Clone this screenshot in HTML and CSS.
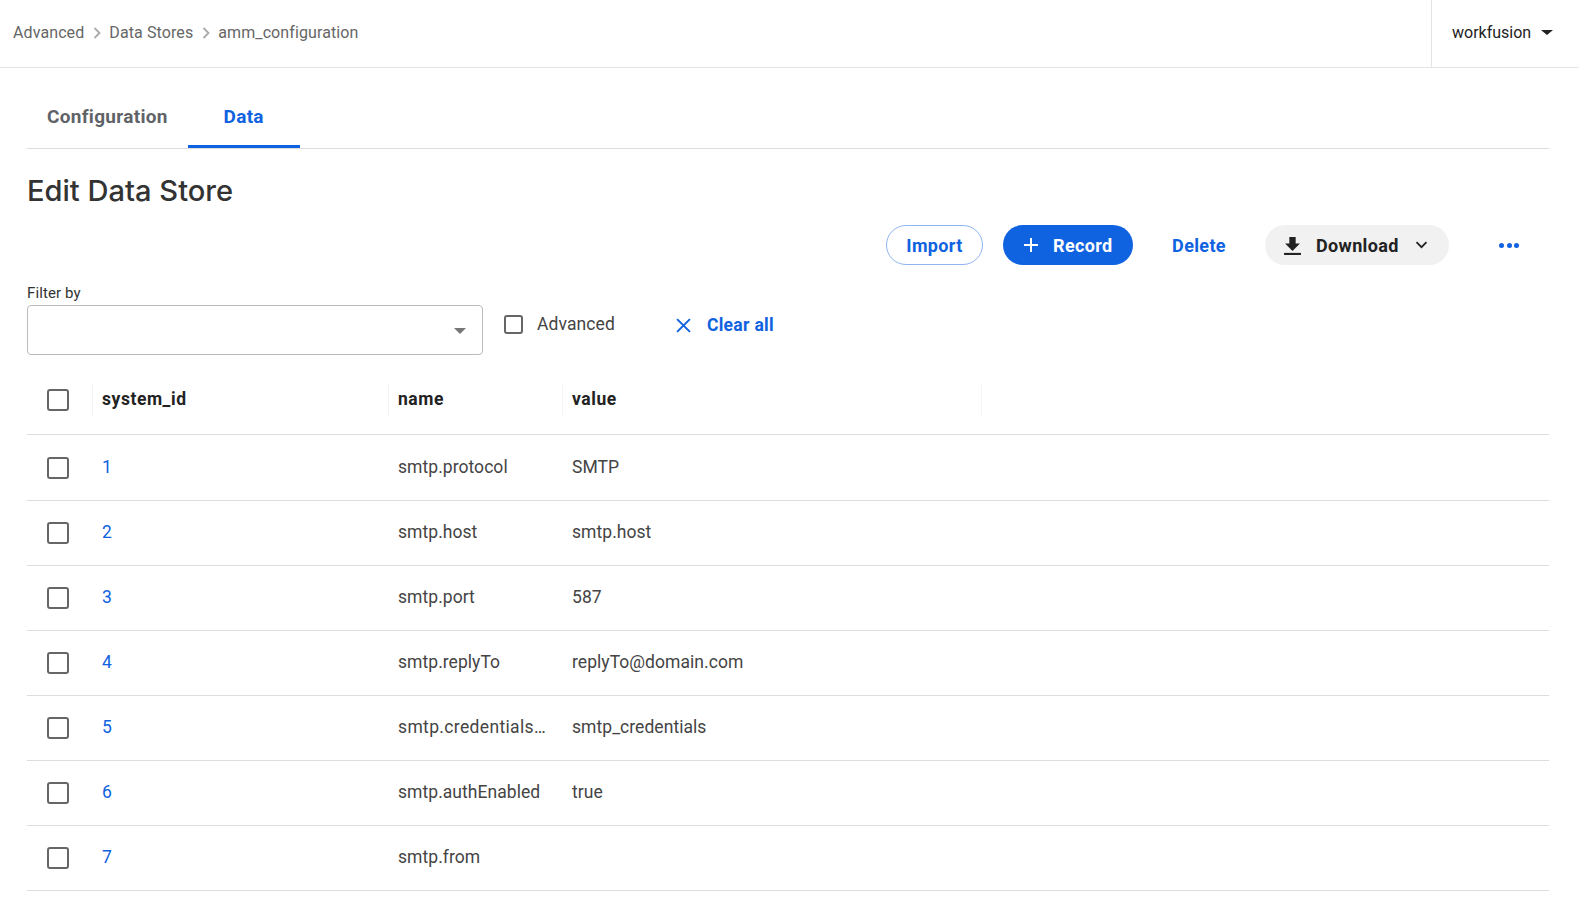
FILE: index.html
```html
<!DOCTYPE html>
<html lang="en">

<head>
    <meta charset="UTF-8">
    <title>Edit Data Store</title>
    <link rel="stylesheet" href="styles.css">
</head>

<body>
    <header class="topbar">
        <nav class="crumbs">
            <span>Advanced</span>
            <svg class="crumbs__sep" viewBox="0 0 8 12"><path d="M1.5 1l5 5-5 5" /></svg>
            <span>Data Stores</span>
            <svg class="crumbs__sep" viewBox="0 0 8 12"><path d="M1.5 1l5 5-5 5" /></svg>
            <span>amm_configuration</span>
        </nav>
        <div class="account">
            <span>workfusion</span>
            <i class="account__caret"></i>
        </div>
    </header>

    <main class="content">
        <div class="tabs">
            <a class="tab">Configuration</a>
            <a class="tab tab--active">Data</a>
        </div>

        <h1 class="title">Edit Data Store</h1>

        <div class="actions">
            <button class="btn btn--outline">Import</button>
            <button class="btn btn--primary">
                <svg class="icon-plus" viewBox="0 0 16 16"><path d="M8 1v14M1 8h14" /></svg>
                Record
            </button>
            <button class="btn btn--text">Delete</button>
            <button class="btn btn--grey">
                <svg class="icon-download" viewBox="0 0 16 18"><path d="M5 1h6v6h4l-7 7.2L1 7h4z" /><path d="M0 16h16v2H0z" /></svg>
                Download
                <svg class="icon-chevron" viewBox="0 0 12 8"><path d="M1 1.2l5 5 5-5" /></svg>
            </button>
            <button class="btn-more"><i></i><i></i><i></i></button>
        </div>

        <div class="filters">
            <div class="filter">
                <label class="filter__label">Filter by</label>
                <div class="select"><i class="select__caret"></i></div>
            </div>
            <label class="advanced"><span class="check check--small"></span>Advanced</label>
            <a class="clear">
                <svg class="icon-x" viewBox="0 0 14 14"><path d="M1 1l12 12M13 1L1 13" /></svg>
                Clear all
            </a>
        </div>

        <div class="table">
            <div class="row row--head">
                <div class="cell cell--check"><span class="check"></span></div>
                <div class="cell cell--id">system_id</div>
                <div class="cell cell--name">name</div>
                <div class="cell cell--value">value</div>
            </div>
            <div class="row row--first">
                <div class="cell cell--check"><span class="check"></span></div>
                <div class="cell cell--id"><a>1</a></div>
                <div class="cell cell--name">smtp.protocol</div>
                <div class="cell cell--value">SMTP</div>
            </div>
            <div class="row">
                <div class="cell cell--check"><span class="check"></span></div>
                <div class="cell cell--id"><a>2</a></div>
                <div class="cell cell--name">smtp.host</div>
                <div class="cell cell--value">smtp.host</div>
            </div>
            <div class="row">
                <div class="cell cell--check"><span class="check"></span></div>
                <div class="cell cell--id"><a>3</a></div>
                <div class="cell cell--name">smtp.port</div>
                <div class="cell cell--value">587</div>
            </div>
            <div class="row">
                <div class="cell cell--check"><span class="check"></span></div>
                <div class="cell cell--id"><a>4</a></div>
                <div class="cell cell--name">smtp.replyTo</div>
                <div class="cell cell--value">replyTo@domain.com</div>
            </div>
            <div class="row">
                <div class="cell cell--check"><span class="check"></span></div>
                <div class="cell cell--id"><a>5</a></div>
                <div class="cell cell--name"><span class="clip">smtp.credentials…</span></div>
                <div class="cell cell--value">smtp_credentials</div>
            </div>
            <div class="row">
                <div class="cell cell--check"><span class="check"></span></div>
                <div class="cell cell--id"><a>6</a></div>
                <div class="cell cell--name">smtp.authEnabled</div>
                <div class="cell cell--value">true</div>
            </div>
            <div class="row">
                <div class="cell cell--check"><span class="check"></span></div>
                <div class="cell cell--id"><a>7</a></div>
                <div class="cell cell--name">smtp.from</div>
                <div class="cell cell--value"></div>
            </div>
        </div>
    </main>
</body>

</html>
```

FILE: styles.css
```css
* {
    margin: 0;
    padding: 0;
    box-sizing: border-box;
}

html {
    height: 100%;
}

body {
    min-height: 100%;
    background-color: #fff;
    color: #333;
    font-family: Roboto, "Liberation Sans", sans-serif;
    font-size: 16px;
    overflow: hidden;
}

.topbar {
    display: flex;
    justify-content: space-between;
    height: 68px;
    border-bottom: 1px solid #e4e4e4;
}

.crumbs {
    display: flex;
    align-items: center;
    padding-left: 13px;
    padding-bottom: 2px;
    color: #666;
    font-size: 16px;
    letter-spacing: 0.1px;
}

.crumbs__sep {
    width: 8px;
    height: 12px;
    margin: 0 8.5px;
    fill: none;
    stroke: #aaa;
    stroke-width: 1.8;
}

.account {
    display: flex;
    align-items: center;
    gap: 10px;
    width: 148px;
    padding-left: 20px;
    padding-bottom: 2px;
    border-left: 1px solid #e4e4e4;
    color: #222;
    font-size: 16px;
}

.account__caret {
    border-left: 6px solid transparent;
    border-right: 6px solid transparent;
    border-top: 5px solid #222;
}

.content {
    padding: 0 30px 0 27px;
}

.tabs {
    display: flex;
    height: 81px;
    padding-top: 20px;
    border-bottom: 1px solid #ddd;
}

.tab {
    display: flex;
    align-items: center;
    justify-content: center;
    height: 60px;
    padding: 0 20px;
    border-bottom: 3px solid transparent;
    color: #5f6368;
    font-size: 19px;
    font-weight: 700;
    letter-spacing: 0.3px;
}

.tab--active {
    width: 112px;
    color: #0f62e0;
    border-bottom-color: #0f62e0;
}

.title {
    margin-top: 24px;
    color: #333;
    font-family: Inter, sans-serif;
    font-size: 29.1px;
    font-weight: 500;
    line-height: 35px;
}

.actions {
    display: flex;
    align-items: center;
    justify-content: flex-end;
    margin-top: 17px;
    padding-right: 30px;
}

button {
    border: 0;
    background: none;
    font-family: Roboto, "Liberation Sans", sans-serif;
    font-size: 18px;
    font-weight: 700;
    letter-spacing: 0.35px;
}

.btn {
    display: flex;
    align-items: center;
    height: 40px;
    border-radius: 20px;
    white-space: nowrap;
}

.btn--outline {
    width: 97px;
    justify-content: center;
    margin-right: 20px;
    border: 1px solid #8fb5f0;
    color: #0f62e0;
}

.btn--primary {
    width: 130px;
    padding-left: 20px;
    margin-right: 20px;
    background-color: #0f62e0;
    color: #fff;
}

.icon-plus {
    width: 16px;
    height: 16px;
    margin-right: 14px;
    fill: none;
    stroke: #fff;
    stroke-width: 2;
}

.btn--text {
    width: 92px;
    justify-content: center;
    margin-right: 20px;
    color: #0f62e0;
}

.btn--grey {
    width: 184px;
    padding-left: 19px;
    background-color: #f1f1f1;
    color: #222;
}

.icon-download {
    width: 17px;
    height: 19px;
    margin-right: 15px;
    fill: #222;
}

.icon-chevron {
    width: 13px;
    height: 8px;
    margin-left: 16px;
    fill: none;
    stroke: #222;
    stroke-width: 1.8;
}

.btn-more {
    display: flex;
    gap: 2.5px;
    margin-left: 50px;
}

.btn-more i {
    width: 5px;
    height: 5px;
    border-radius: 50%;
    background-color: #0f62e0;
}

.filters {
    display: flex;
    align-items: flex-start;
    margin-top: 20px;
}

.filter {
    width: 456px;
}

.filter__label {
    display: block;
    height: 20px;
    color: #333;
    font-size: 15px;
    letter-spacing: 0.1px;
    line-height: 16px;
}

.select {
    position: relative;
    height: 50px;
    border: 1px solid #bbb;
    border-radius: 4px;
}

.select__caret {
    position: absolute;
    top: 22px;
    right: 16px;
    border-left: 6.5px solid transparent;
    border-right: 6.5px solid transparent;
    border-top: 6px solid #777;
}

.advanced {
    display: flex;
    align-items: center;
    margin: 29px 0 0 21px;
    color: #444;
    font-size: 17.5px;
    letter-spacing: 0.1px;
}

.check {
    display: block;
    width: 22px;
    height: 22px;
    border: 2.5px solid #666;
    border-radius: 3px;
}

.check--small {
    width: 19px;
    height: 19px;
    margin-right: 14px;
    border-width: 2px;
}

.clear {
    display: flex;
    align-items: center;
    margin: 30px 0 0 61px;
    color: #0f62e0;
    font-size: 17.5px;
    font-weight: 700;
    letter-spacing: 0.3px;
}

.icon-x {
    width: 15px;
    height: 15px;
    margin-right: 16px;
    fill: none;
    stroke: #0f62e0;
    stroke-width: 1.8;
}

.table {
    margin-top: 8px;
}

.row {
    display: flex;
    align-items: center;
    height: 65px;
    border-bottom: 1px solid #ddd;
    color: #444;
    font-size: 17.5px;
    letter-spacing: 0.05px;
}

.row--head {
    height: 72px;
    padding-top: 3px;
    color: #222;
    font-weight: 700;
    letter-spacing: 0.55px;
}

.row--first {
    height: 66px;
}

.row a {
    color: #0f62e0;
}

.cell {
    position: relative;
    padding-bottom: 2px;
    white-space: nowrap;
}

.cell--check {
    width: 75px;
    padding-left: 20px;
    padding-bottom: 0;
}

.cell--id {
    width: 296px;
}

.cell--name {
    width: 174px;
}

.clip {
    display: block;
    letter-spacing: 0.35px;
}

.row--head .cell:not(.cell--check)::before {
    content: "";
    position: absolute;
    top: -5px;
    bottom: -5px;
    left: -10px;
    border-left: 1px solid #f4f4f4;
}

.row--head .cell--value::after {
    content: "";
    position: absolute;
    top: -5px;
    bottom: -5px;
    left: 409px;
    border-left: 1px solid #f4f4f4;
}
```
